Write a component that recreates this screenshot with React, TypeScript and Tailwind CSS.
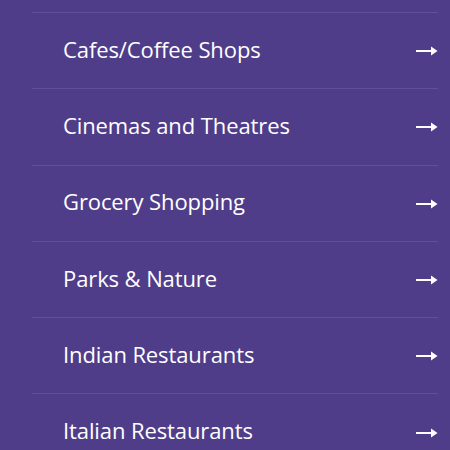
import React from 'react';

const items = [
  'Cafes/Coffee Shops',
  'Cinemas and Theatres',
  'Grocery Shopping',
  'Parks & Nature',
  'Indian Restaurants',
  'Italian Restaurants',
];

const Arrow = () => (
  <svg width="22" height="10" viewBox="0 0 22 10" className="text-white mt-[1px]">
    <path d="M0 4h16v2H0z" fill="currentColor" />
    <path d="M15 0.5L21.5 5L15 9.5z" fill="currentColor" />
  </svg>
);

const App = () => {
  return (
    <div className="w-[450px] h-[450px] overflow-hidden bg-[#4f3d8a] pt-[12px] font-['Open_Sans',sans-serif]">
      <ul className="ml-[32px] mr-[12px]">
        {items.map((item) => (
          <li
            key={item}
            className="h-[76.3px] border-t border-[#604f9a] flex items-center justify-between pl-[31px]"
          >
            <span className="text-white text-[22px] leading-none tracking-[-0.1px] mb-[4px]">{item}</span>
            <Arrow />
          </li>
        ))}
      </ul>
    </div>
  );
};

export default App;
